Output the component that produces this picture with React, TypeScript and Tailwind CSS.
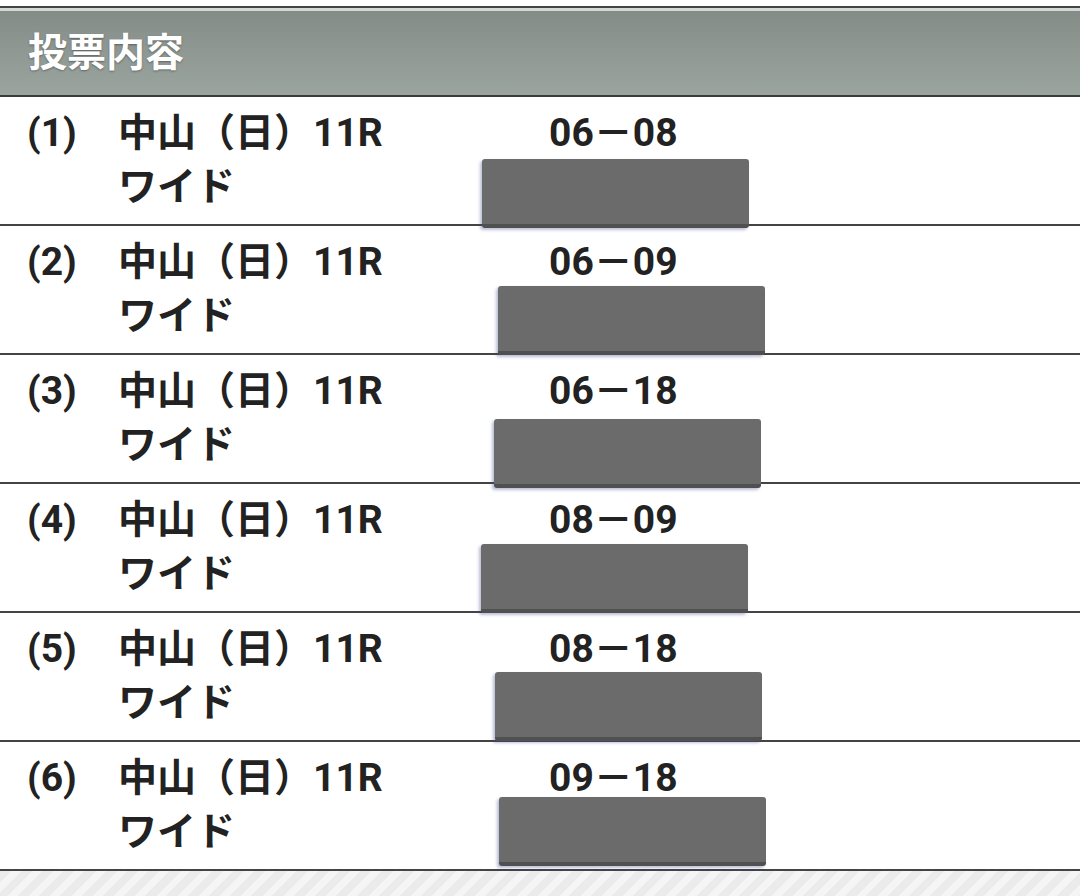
const BETS = [
  { no: 1, race: '中山（日）11R', pair: '06－08', box: 'left-[482px] top-[62px]' },
  { no: 2, race: '中山（日）11R', pair: '06－09', box: 'left-[498px] top-[60px]' },
  { no: 3, race: '中山（日）11R', pair: '06－18', box: 'left-[494px] top-[64px]' },
  { no: 4, race: '中山（日）11R', pair: '08－09', box: 'left-[481px] top-[60px]' },
  { no: 5, race: '中山（日）11R', pair: '08－18', box: 'left-[495px] top-[59px]' },
  { no: 6, race: '中山（日）11R', pair: '09－18', box: 'left-[499px] top-[55px]' },
];

export default function App() {
  return (
    <div className="flex min-h-[896px] w-[1080px] flex-col bg-white font-['Roboto','Noto_Sans_CJK_JP',sans-serif] text-[#222]">
      <div className="h-[6px] bg-white" />
      <div className="h-[2px] bg-[#444]" />
      <div className="h-[3px] bg-[#d4dbd7]" />
      <div className="flex h-[84px] items-center bg-gradient-to-b from-[#848c87] to-[#9ba59f] px-[28px]">
        <h1 className="text-[39px] font-bold leading-none text-white [text-shadow:0_1px_2px_rgba(0,0,0,0.35)]">
          投票内容
        </h1>
      </div>
      <div className="h-[2px] bg-[#3c3c3c]" />

      {BETS.map((b) => (
        <BetRow key={b.no} {...b} />
      ))}

      <div className="flex-1 bg-[repeating-linear-gradient(135deg,#ebebeb_0px,#ebebeb_8px,#f5f5f5_8px,#f5f5f5_15px)]" />
    </div>
  );
}

function BetRow({ no, race, pair, box }: { no: number; race: string; pair: string; box: string }) {
  return (
    <div className="relative border-b-2 border-[#444]">
      <div className="flex h-[127px] pt-[9px] text-[39px] font-bold leading-[54px]">
        <div className="w-[118px] shrink-0 pl-[27px]">({no})</div>
        <div className="w-[431px] shrink-0">
          <div>{race}</div>
          <div>ワイド</div>
        </div>
        <div className="shrink-0">{pair}</div>
      </div>
      <div
        className={`absolute ${box} h-[69px] w-[267px] rounded-[3px] border-b-[4px] border-[#505050] bg-[#6b6b6b] shadow-[-2px_2px_3px_rgba(60,70,140,0.35)]`}
      />
    </div>
  );
}
